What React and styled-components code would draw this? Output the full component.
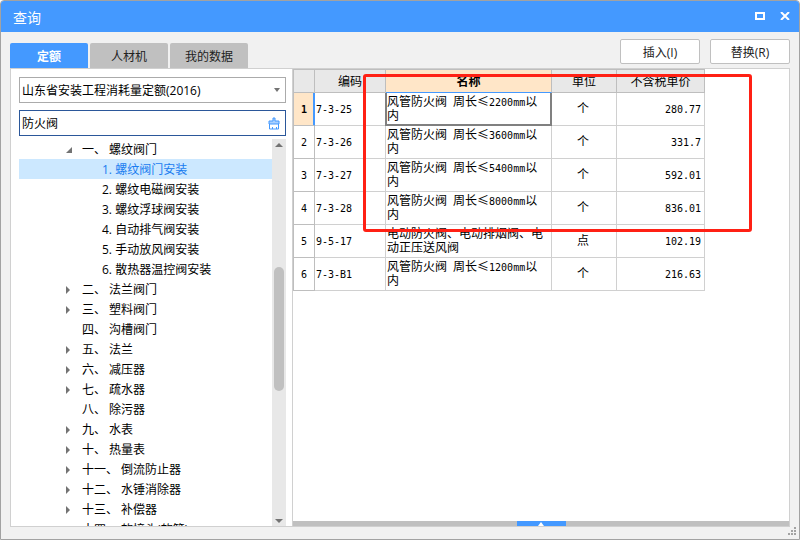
import React from "react";
import styled, { createGlobalStyle } from "styled-components";

const GlobalStyle = createGlobalStyle`
    * {
        box-sizing: border-box;
    }

    body {
        margin: 0;
        font-family: "Open Sans", "Noto Sans CJK SC", sans-serif;
        font-size: 12px;
        color: #000000;
    }

    button,
    input,
    select {
        font: inherit;
        color: inherit;
    }
`;

const Window = styled.div`
    height: 100vh;
    display: flex;
    flex-direction: column;
    position: relative;
    background-color: #f1f1f1;
    border: 1px solid #a2a2a2;
    border-radius: 4px 4px 0 0;
    overflow: hidden;
`;

const TitleBar = styled.header`
    height: 31px;
    flex-shrink: 0;
    display: flex;
    align-items: center;
    justify-content: space-between;
    padding: 0 9px 1px 12px;
    background-color: #4499ff;
    color: #ffffff;
`;

const Title = styled.h1`
    margin: 0;
    padding-top: 3px;
    font-size: 14px;
    line-height: 20px;
    font-weight: 400;
`;

const WindowControls = styled.div`
    display: flex;
    gap: 15px;
`;

const IconButton = styled.button`
    display: flex;
    align-items: center;
    justify-content: center;
    padding: 0;
    border: none;
    background: none;
`;

const Toolbar = styled.div`
    display: flex;
    justify-content: space-between;
    padding: 7px 9px 0;
`;

const Tabs = styled.div`
    display: flex;
    align-items: flex-end;
    gap: 2px;
`;

const Tab = styled.button`
    width: 78px;
    height: 25px;
    padding: 0;
    border: none;
    border-radius: 2px 2px 0 0;
    background-color: ${(props) => (props.$active ? "#4499ff" : "#c0c0c0")};
    color: ${(props) => (props.$active ? "#ffffff" : "#222222")};
    font-weight: ${(props) => (props.$active ? 700 : 400)};
`;

const Actions = styled.div`
    display: flex;
    gap: 10px;
    padding-bottom: 4px;
`;

const ActionButton = styled.button`
    width: 80px;
    height: 25px;
    padding: 0;
    border: 1px solid #c0c0c0;
    border-radius: 2px;
    background-color: #ffffff;
    color: #222222;
`;

const Panel = styled.main`
    flex: 1;
    min-height: 0;
    display: flex;
    margin: 0 9px 12px;
    border: 1px solid #d0d0d0;
    background-color: #ffffff;
`;

const Sidebar = styled.section`
    width: 282px;
    flex-shrink: 0;
    display: flex;
    flex-direction: column;
    padding: 8px 6px 0 8px;
    border-right: 1px solid #d0d0d0;
`;

const Field = styled.div`
    height: 26px;
    flex-shrink: 0;
    display: flex;
    align-items: center;
    margin-bottom: 7px;
    padding-right: 5px;
    border: 1px solid ${(props) => (props.$focused ? "#2b579a" : "#ababab")};

    &:last-of-type {
        margin-bottom: 3px;
    }
`;

const Select = styled.select`
    flex: 1;
    min-width: 0;
    height: 24px;
    padding: 0 2px;
    border: none;
    outline: none;
    appearance: none;
    background: none;
`;

const SearchInput = styled.input`
    flex: 1;
    min-width: 0;
    height: 24px;
    padding: 0 2px;
    border: none;
    outline: none;
    background: none;
`;

const TreeArea = styled.section`
    flex: 1;
    min-height: 0;
    display: flex;
`;

const Tree = styled.ul`
    flex: 1;
    margin: 0;
    padding: 0;
    overflow: hidden;
    list-style: none;
`;

const TreeRow = styled.li`
    height: 20px;
    display: flex;
    align-items: center;
    padding-top: 2px;
    padding-left: ${(props) => (props.$child ? 83 : 44)}px;
    line-height: 18px;
    white-space: pre;
    background-color: ${(props) => (props.$selected ? "#cce8ff" : "transparent")};
    color: ${(props) => (props.$selected ? "#1a7cf0" : "#000000")};
`;

const TreeToggle = styled.span`
    width: 19px;
    display: flex;
    padding-left: 3px;
`;

const Scrollbar = styled.div`
    width: 14px;
    display: flex;
    flex-direction: column;
    align-items: center;
    justify-content: space-between;
    background-color: #e8e8e8;
`;

const Thumb = styled.div`
    width: 10px;
    height: 32%;
    margin-top: 117px;
    margin-bottom: auto;
    border-radius: 5px;
    background-color: #c0c0c0;
`;

const ScrollButton = styled(IconButton)`
    height: 11px;
`;

const Content = styled.section`
    flex: 1;
    min-width: 0;
    display: flex;
    flex-direction: column;
    justify-content: space-between;
`;

const Table = styled.table`
    width: 412px;
    table-layout: fixed;
    border-collapse: separate;
    border-spacing: 0;
    border-top: 1px solid #bebebe;
    border-left: 1px solid #bebebe;
    font-family: "Noto Sans CJK SC", sans-serif;
    line-height: 14px;
`;

const HeadCell = styled.th`
    height: 23px;
    padding: 0;
    border-right: 1px solid #bebebe;
    border-bottom: 1px solid ${(props) => (props.$active ? "#4499ff" : "#bebebe")};
    background-color: ${(props) => (props.$active ? "#ffe6c8" : "#e8e8e8")};
    font-weight: ${(props) => (props.$active ? 700 : 400)};
`;

const RowNumber = styled.th`
    height: 33px;
    padding: 2px 0 0;
    border-right: 1px solid ${(props) => (props.$active ? "#4499ff" : "#bebebe")};
    border-bottom: 1px solid #bebebe;
    background-color: ${(props) => (props.$active ? "#ffe6c8" : "#ffffff")};
    box-shadow: ${(props) => (props.$active ? "inset -1px 0 0 #4499ff" : "none")};
    font-family: "DejaVu Sans Mono", monospace;
    font-size: 10px;
    font-weight: ${(props) => (props.$active ? 700 : 400)};
`;

const Cell = styled.td`
    height: 33px;
    padding: 0 3px 2px 1px;
    border-right: 1px solid ${(props) => (props.$active ? "#808080" : "#d0d0d0")};
    border-bottom: 1px solid ${(props) => (props.$active ? "#808080" : "#d0d0d0")};
    text-align: ${(props) => props.$align || "left"};
    box-shadow: ${(props) =>
        props.$active
            ? "inset -1px -1px 0 #808080, inset 1px 0 0 #808080, -1px 0 0 #808080"
            : "none"};
`;

const Latin = styled.span`
    font-family: "DejaVu Sans Mono", monospace;
    font-size: 10px;
    line-height: 10px;
`;

const Splitter = styled.div`
    height: 5px;
    display: flex;
    justify-content: center;
    background-color: #c0c0c0;
`;

const SplitterHandle = styled(IconButton)`
    width: 49px;
    height: 5px;
    background-color: #4499ff;
`;

const Highlight = styled.div`
    position: absolute;
    left: 362px;
    top: 73px;
    width: 389px;
    height: 158px;
    border: 3px solid #ff2014;
    border-radius: 3px;
    pointer-events: none;
`;

const Grip = styled.svg`
    position: absolute;
    right: 3px;
    bottom: 4px;
`;

const chapters = [
    { text: "一、 螺纹阀门", toggle: "open" },
    { text: "1. 螺纹阀门安装", child: true, selected: true },
    { text: "2. 螺纹电磁阀安装", child: true },
    { text: "3. 螺纹浮球阀安装", child: true },
    { text: "4. 自动排气阀安装", child: true },
    { text: "5. 手动放风阀安装", child: true },
    { text: "6. 散热器温控阀安装", child: true },
    { text: "二、 法兰阀门", toggle: "closed" },
    { text: "三、 塑料阀门", toggle: "closed" },
    { text: "四、 沟槽阀门" },
    { text: "五、 法兰", toggle: "closed" },
    { text: "六、 减压器", toggle: "closed" },
    { text: "七、 疏水器", toggle: "closed" },
    { text: "八、 除污器" },
    { text: "九、 水表", toggle: "closed" },
    { text: "十、 热量表", toggle: "closed" },
    { text: "十一、 倒流防止器", toggle: "closed" },
    { text: "十二、 水锤消除器", toggle: "closed" },
    { text: "十三、 补偿器", toggle: "closed" },
    { text: "十四、 软接头(软管)" },
];

const items = [
    { code: "7-3-25", name: "风管防火阀 周长≤2200mm以内", unit: "个", price: "280.77" },
    { code: "7-3-26", name: "风管防火阀 周长≤3600mm以内", unit: "个", price: "331.7" },
    { code: "7-3-27", name: "风管防火阀 周长≤5400mm以内", unit: "个", price: "592.01" },
    { code: "7-3-28", name: "风管防火阀 周长≤8000mm以内", unit: "个", price: "836.01" },
    { code: "9-5-17", name: "电动防火阀、电动排烟阀、电动正压送风阀", unit: "点", price: "102.19" },
    { code: "7-3-B1", name: "风管防火阀 周长≤1200mm以内", unit: "个", price: "216.63" },
];

// half-width characters are set in the fixed-width face
const MixedText = ({ text }) =>
    text
        .split(/([ -~]+)/)
        .map((part, index) =>
            index % 2 ? <Latin key={index}>{part}</Latin> : part
        );

const ToggleIcon = ({ state }) => (
    <svg width="8" height="10" viewBox="0 0 8 10" fill="#737373">
        {state === "open" ? <path d="M6 2v6H0z" /> : <path d="M0 1v8l4-4z" />}
    </svg>
);

const TriangleIcon = ({ up, width = 8, color = "#737373" }) => (
    <svg width={width} height="4" viewBox="0 0 8 4" preserveAspectRatio="none" fill={color}>
        <path d={up ? "M0 4h8L4 0z" : "M0 0h8L4 4z"} />
    </svg>
);

const ClearIcon = () => (
    <svg width="12" height="13" viewBox="0 0 12 13">
        <path d="M5 1h2v3h4v3H1V4h4z" fill="#a8d0ff" stroke="#4499ff" />
        <path d="M1.500 7v5h9V7M4.500 12v-2M8.500 12v-2" fill="none" stroke="#4499ff" />
    </svg>
);

const App = () => {
    return (
        <>
            <GlobalStyle />
            <Window>
                <TitleBar>
                    <Title>查询</Title>
                    <WindowControls>
                        <IconButton aria-label="最大化">
                            <svg width="10" height="8" viewBox="0 0 10 8">
                                <path d="M1 1h8v6H1z" fill="none" stroke="#ffffff" strokeWidth="2" />
                            </svg>
                        </IconButton>
                        <IconButton aria-label="关闭">
                            <svg width="10" height="8" viewBox="0 0 10 8">
                                <path d="M1 0l8 8M9 0L1 8" stroke="#ffffff" strokeWidth="2" />
                            </svg>
                        </IconButton>
                    </WindowControls>
                </TitleBar>
                <Toolbar>
                    <Tabs>
                        <Tab $active>定额</Tab>
                        <Tab>人材机</Tab>
                        <Tab>我的数据</Tab>
                    </Tabs>
                    <Actions>
                        <ActionButton>插入(I)</ActionButton>
                        <ActionButton>替换(R)</ActionButton>
                    </Actions>
                </Toolbar>
                <Panel>
                    <Sidebar>
                        <Field>
                            <Select aria-label="定额库">
                                <option>山东省安装工程消耗量定额(2016)</option>
                            </Select>
                            <TriangleIcon width={6} />
                        </Field>
                        <Field $focused>
                            <SearchInput aria-label="查询" defaultValue="防火阀" />
                            <IconButton aria-label="清除">
                                <ClearIcon />
                            </IconButton>
                        </Field>
                        <TreeArea>
                            <Tree role="tree">
                                {chapters.map((row) => (
                                    <TreeRow
                                        key={row.text}
                                        role="treeitem"
                                        $child={row.child}
                                        $selected={row.selected}
                                    >
                                        {!row.child && (
                                            <TreeToggle>
                                                {row.toggle && <ToggleIcon state={row.toggle} />}
                                            </TreeToggle>
                                        )}
                                        {row.text}
                                    </TreeRow>
                                ))}
                            </Tree>
                            <Scrollbar>
                                <ScrollButton aria-label="向上">
                                    <TriangleIcon up />
                                </ScrollButton>
                                <Thumb />
                                <ScrollButton aria-label="向下">
                                    <TriangleIcon />
                                </ScrollButton>
                            </Scrollbar>
                        </TreeArea>
                    </Sidebar>
                    <Content>
                        <Table>
                            <colgroup>
                                <col width="21" />
                                <col width="71" />
                                <col width="166" />
                                <col width="65" />
                                <col width="88" />
                            </colgroup>
                            <thead>
                                <tr>
                                    <HeadCell />
                                    <HeadCell>编码</HeadCell>
                                    <HeadCell $active>名称</HeadCell>
                                    <HeadCell>单位</HeadCell>
                                    <HeadCell>不含税单价</HeadCell>
                                </tr>
                            </thead>
                            <tbody>
                                {items.map((item, index) => (
                                    <tr key={item.code}>
                                        <RowNumber $active={index === 0}>{index + 1}</RowNumber>
                                        <Cell>
                                            <MixedText text={item.code} />
                                        </Cell>
                                        <Cell $active={index === 0}>
                                            <MixedText text={item.name} />
                                        </Cell>
                                        <Cell $align="center">{item.unit}</Cell>
                                        <Cell $align="right">
                                            <MixedText text={item.price} />
                                        </Cell>
                                    </tr>
                                ))}
                            </tbody>
                        </Table>
                        <Splitter>
                            <SplitterHandle aria-label="展开">
                                <TriangleIcon up width={6} color="#ffffff" />
                            </SplitterHandle>
                        </Splitter>
                    </Content>
                </Panel>
                <Grip width="8" height="8" viewBox="0 0 8 8" fill="#a2a2a2">
                    <path d="M6 0h2v2H6zM3 3h2v2H3zM6 3h2v2H6zM0 6h2v2H0zM3 6h2v2H3zM6 6h2v2H6z" />
                </Grip>
                <Highlight />
            </Window>
        </>
    );
};

export default App;
